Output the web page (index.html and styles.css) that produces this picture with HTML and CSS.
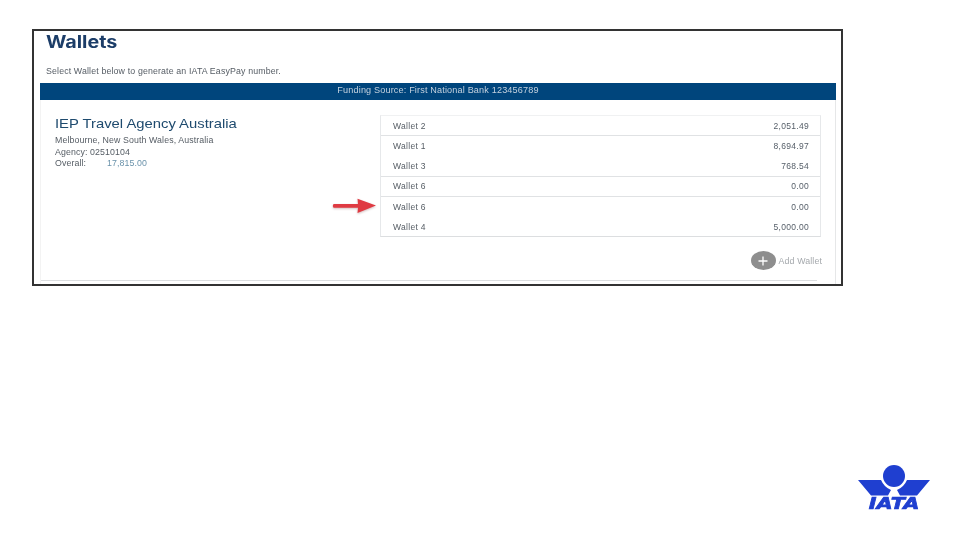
FILE: index.html
```html
<!DOCTYPE html>
<html lang="en">
<head>
<meta charset="utf-8">
<title>Wallets</title>
<link rel="stylesheet" href="styles.css">
</head>
<body>
<main class="slide">
  <section class="shot">
    <h1 class="title">Wallets</h1>
    <p class="intro">Select Wallet below to generate an IATA EasyPay number.</p>
    <div class="bar">Funding Source: First National Bank 123456789</div>
    <div class="panel">
      <div class="body">
        <div class="agency">
          <h2 class="agency-name">IEP Travel Agency Australia</h2>
          <p class="agency-line agency-place">Melbourne, New South Wales, Australia</p>
          <p class="agency-line">Agency: 02510104</p>
          <p class="agency-line overall"><span class="overall-label">Overall:</span><span class="overall-value">17,815.00</span></p>
        </div>
        <div class="pointer">
          <svg class="arrow" width="44" height="16" viewBox="0 0 44 16" aria-hidden="true">
            <path d="M1.500 6H26L25.500 .8L44 7.500L25.500 15L26 9.800H1.500Q0 8 1.500 6Z" fill="#df3a42"/>
          </svg>
        </div>
        <ul class="wallets">
          <li class="wallet"><span>Wallet 2</span><span class="amount">2,051.49</span></li>
          <li class="wallet wallet-plain"><span>Wallet 1</span><span class="amount">8,694.97</span></li>
          <li class="wallet"><span>Wallet 3</span><span class="amount">768.54</span></li>
          <li class="wallet"><span>Wallet 6</span><span class="amount">0.00</span></li>
          <li class="wallet wallet-plain"><span>Wallet 6</span><span class="amount">0.00</span></li>
          <li class="wallet wallet-last"><span>Wallet 4</span><span class="amount">5,000.00</span></li>
        </ul>
      </div>
      <div class="add">
        <span class="add-btn">
          <svg width="10" height="10" viewBox="0 0 10 10" aria-hidden="true"><path d="M5 .5V9.500M.5 5H9.500" stroke="#fff" stroke-width="1.300"/></svg>
        </span>
        <span class="add-label">Add Wallet</span>
      </div>
      <div class="rule"></div>
    </div>
  </section>
  <footer class="footer">
    <div class="logo">
      <svg class="logo-mark" width="72" height="32" viewBox="0 0 72 32" aria-hidden="true">
        <circle cx="36" cy="11" r="11" fill="#1f3fd0"/>
        <path d="M0 15H23Q26 22 33 25L30 30.500H13ZM72 15H49Q46 22 39 25L42 30.500H59Z" fill="#1f3fd0"/>
      </svg>
      <span class="logo-text">IATA</span>
    </div>
  </footer>
</main>
</body>
</html>
```

FILE: styles.css
```css
* { box-sizing: border-box; }
html, body { margin: 0; padding: 0; }
body {
  width: 960px;
  height: 540px;
  background: #fff;
  overflow: hidden;
  font-family: "Liberation Sans", Arial, sans-serif;
  color: #555c64;
}
.slide {
  width: 960px;
  height: 540px;
  padding: 29px 0 0 32px;
  display: flex;
  flex-direction: column;
}
.shot {
  width: 811px;
  height: 257px;
  border: 2px solid #333;
  padding: 0 5px 0 6px;
  display: flex;
  flex-direction: column;
  overflow: hidden;
}
.intro, .bar, .body, .add { filter: blur(.3px); }
.title {
  margin: 2px 0 0 6px;
  font-family: Inter, "Liberation Sans", sans-serif;
  font-size: 17px;
  line-height: 19px;
  font-weight: 700;
  color: #1c3d68;
  transform: scaleX(1.16);
  transform-origin: left center;
  filter: blur(.3px);
}
.intro {
  margin: 13px 0 0 6px;
  font-size: 8.800px;
  line-height: 12px;
  letter-spacing: .14px;
}
.bar {
  margin-top: 6px;
  width: 796px;
  height: 17px;
  background: #00457c;
  color: #c3d1de;
  font-size: 9.100px;
  line-height: 15px;
  text-align: center;
  letter-spacing: .16px;
}
.panel {
  width: 796px;
  flex: 1;
  border-left: 1px solid #f3f3f3;
  border-right: 1px solid #e6e7e8;
  display: flex;
  flex-direction: column;
}
.body {
  display: flex;
  margin-top: 15px;
  width: 781px;
}
.agency {
  width: 295px;
  padding: 1px 0 0 14px;
}
.agency-name {
  margin: 0 0 4px;
  font-size: 13px;
  line-height: 15px;
  font-weight: 400;
  color: #1e4a6e;
  white-space: nowrap;
  transform: scaleX(1.14);
  transform-origin: left center;
}
.agency-line {
  margin: 0;
  font-size: 8.800px;
  line-height: 11px;
  letter-spacing: .1px;
}
.agency-place { margin-bottom: 1px; }
.overall { display: flex; }
.overall-label { width: 52px; }
.overall-value { color: #6b93ab; }
.pointer {
  width: 44px;
  margin-left: -4px;
  margin-right: 4px;
  padding-top: 83px;
}
.arrow { display: block; filter: drop-shadow(0 1px 1px rgba(120, 60, 60, .35)); }
.wallets {
  list-style: none;
  margin: 0;
  padding: 0;
  width: 441px;
  height: 122px;
  border: 1px solid #e6e8ea;
  border-top-color: #f0f1f2;
  border-bottom-color: #dcdee0;
}
.wallet {
  display: flex;
  justify-content: space-between;
  align-items: center;
  height: 20.200px;
  padding: 0 11px 0 12px;
  font-size: 8.500px;
  letter-spacing: .3px;
  border-bottom: 1px solid #e0e2e4;
}
.wallet-plain, .wallet-last { border-bottom: 0; }
.amount { color: #555e68; }
.add {
  display: flex;
  align-items: center;
  justify-content: flex-end;
  gap: 3px;
  width: 781px;
  margin-top: 14px;
}
.add-btn {
  width: 25px;
  height: 19px;
  border-radius: 50%;
  background: #8e8e8e;
  display: flex;
  align-items: center;
  justify-content: center;
}
.add-label {
  font-size: 8.800px;
  color: #a4a8ac;
  letter-spacing: .12px;
}
.rule {
  width: 776px;
  margin-top: 10px;
  border-top: 1px solid #dcdee0;
}
.footer {
  flex: 1;
  display: flex;
  justify-content: flex-end;
  padding: 179px 30px 0 0;
}
.logo {
  width: 72px;
  display: flex;
  flex-direction: column;
  align-items: center;
}
.logo-mark { display: block; }
.logo-text {
  margin-top: 0;
  font-family: "DejaVu Sans", "Liberation Sans", sans-serif;
  font-size: 16.500px;
  line-height: 14px;
  font-weight: 700;
  font-style: italic;
  color: #1f3fd0;
  -webkit-text-stroke: .7px #1f3fd0;
  transform: scaleX(1.26);
}
```
